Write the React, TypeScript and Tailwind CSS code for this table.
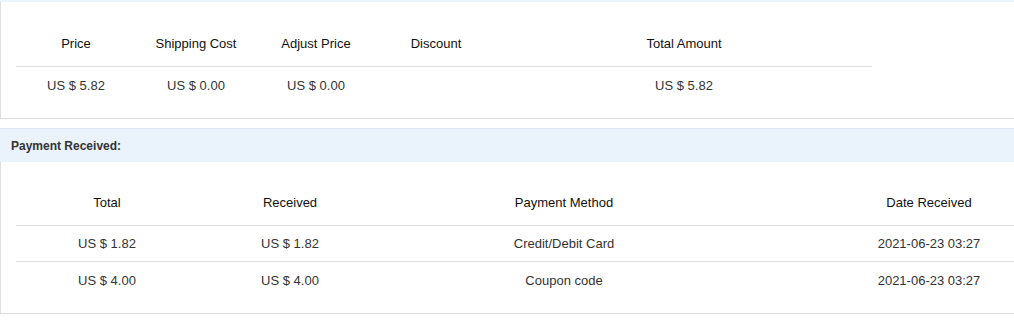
import React from "react";

const font = { fontFamily: '"Liberation Sans", Arial, sans-serif' };

function Row({
  cells,
  widths,
  header,
  border = true,
}: {
  cells: string[];
  widths: string[];
  header?: boolean;
  border?: boolean;
}) {
  return (
    <div
      className={`flex shrink-0 ${header ? "h-[49px] pt-[2px] text-[#111]" : "h-[36px] text-[#333]"} ${
        border ? "border-b border-[#e2e2e2]" : ""
      }`}
    >
      {cells.map((c, i) => (
        <div key={i} className={`${widths[i]} shrink-0 flex items-center justify-center text-[13px] leading-none`}>
          {c}
        </div>
      ))}
    </div>
  );
}

export default function App() {
  const w1 = ["w-[120px]", "w-[120px]", "w-[120px]", "w-[120px]", "w-[376px]"];
  const w2 = ["w-[182px]", "w-[184px]", "w-[364px]", "w-[366px]"];
  return (
    <div className="w-[1014px] h-[320px] overflow-hidden bg-white" style={font}>
      <div className="h-[2px] bg-[#eef4fb]" />
      <div className="border-l border-b border-[#dedede] pl-[15px] pt-4 pb-[15px]">
        <div className="w-[856px] flex flex-col">
          <Row header cells={["Price", "Shipping Cost", "Adjust Price", "Discount", "Total Amount"]} widths={w1} />
          <Row border={false} cells={["US $ 5.82", "US $ 0.00", "US $ 0.00", "", "US $ 5.82"]} widths={w1} />
        </div>
      </div>
      <div className="mt-[9px] h-[34px] border-t border-[#dce8f5] bg-[#eaf2fc] flex items-center pl-[11px]">
        <span className="text-[12px] font-bold text-[#333]">Payment Received:</span>
      </div>
      <div className="border-l border-b border-[#dedede] pl-[15px] pt-[15px] pb-[15px] overflow-hidden">
        <div className="w-[1096px] flex flex-col">
          <Row header cells={["Total", "Received", "Payment Method", "Date Received"]} widths={w2} />
          <Row cells={["US $ 1.82", "US $ 1.82", "Credit/Debit Card", "2021-06-23 03:27"]} widths={w2} />
          <Row border={false} cells={["US $ 4.00", "US $ 4.00", "Coupon code", "2021-06-23 03:27"]} widths={w2} />
        </div>
      </div>
    </div>
  );
}
